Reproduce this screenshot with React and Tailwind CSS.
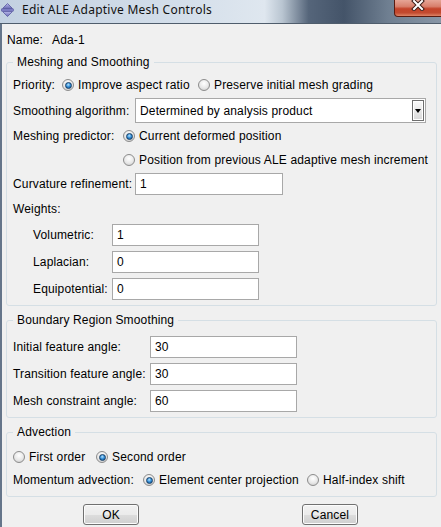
import React from "react";

const F = "font-['Liberation_Sans',Arial,sans-serif]";

function Radio({ checked }) {
  return (
    <span className="w-[12px] h-[12px] rounded-full border border-[#8c8c8c] bg-[radial-gradient(circle_at_50%_35%,#ffffff,#e8e8e8_55%,#c6c6c6)] flex items-center justify-center shrink-0">
      {checked && (
        <span className="w-[7px] h-[7px] rounded-full border border-[#173f66] bg-[radial-gradient(circle_at_45%_35%,#b6e4ff,#2f8ad4_50%,#0c4a84)]" />
      )}
    </span>
  );
}

function RadioItem({ checked, label, className = "" }) {
  return (
    <span className={"flex items-center gap-[4px] shrink-0 " + className}>
      <Radio checked={checked} />
      <span className="whitespace-nowrap">{label}</span>
    </span>
  );
}

function Field({ value, className = "" }) {
  return (
    <div className={"h-[22px] border border-[#a8a8a8] bg-white flex items-center pl-[4px] shrink-0 " + className}>
      {value}
    </div>
  );
}

function Group({ title, className = "", children }) {
  return (
    <div className={"flex flex-col border border-[#d5dfe5] rounded-[3px] " + className}>
      <span className="self-start -mt-[8px] ml-[6px] px-[4px] h-[14px] leading-[14px] bg-[#f0f0f0] whitespace-nowrap">
        {title}
      </span>
      {children}
    </div>
  );
}

function TitleIcon() {
  return (
    <svg width="13" height="14" viewBox="0 0 13 14" className="ml-[1px] mt-[3px] shrink-0">
      <defs>
        <linearGradient id="ig" x1="0" y1="0" x2="0" y2="1">
          <stop offset="0" stopColor="#b9b9ea" />
          <stop offset="1" stopColor="#6a6ab4" />
        </linearGradient>
      </defs>
      <polygon points="6.5,0.5 11.5,5.5 1.5,5.5" fill="url(#ig)" stroke="#5858a0" strokeWidth="0.8" />
      <rect x="0.5" y="6" width="12" height="2" fill="#8c8cd0" stroke="#5858a0" strokeWidth="0.6" />
      <polygon points="1.5,8.5 11.5,8.5 6.5,13.5" fill="url(#ig)" stroke="#5858a0" strokeWidth="0.8" />
    </svg>
  );
}

function TitleBar() {
  return (
    <div className="h-[24px] shrink-0 border-b border-[#4f5d6c] flex items-start bg-[linear-gradient(to_right,#c3d1e1_0%,#d3deea_40%,#dfe7ef_60%,#b9c5d1_64%,#55657a_70%,#445469_78%,#6f7f91_88%,#8896a6_100%)]">
      <TitleIcon />
      <span className="ml-[8px] mt-[3px] h-[14px] leading-[14px] text-[12px] tracking-[0.25px] text-[#111] font-['Noto_Sans',sans-serif] whitespace-nowrap">
        Edit ALE Adaptive Mesh Controls
      </span>
      <div className="ml-auto -mr-[3px] w-[50px] h-[17px] rounded-b-[4px] border border-t-0 border-[#5a1b10] bg-[linear-gradient(to_bottom,#e6a596_0%,#d8806c_40%,#c4442a_55%,#c24a30_80%,#de8466_100%)] flex justify-center">
        <svg width="14" height="11" viewBox="0 0 14 11" className="-ml-[2px]">
          <path d="M3 1 L11 9 M11 1 L3 9" stroke="#3c1d17" strokeWidth="4" strokeLinecap="square" />
          <path d="M3 1 L11 9 M11 1 L3 9" stroke="#ffffff" strokeWidth="2" strokeLinecap="square" />
        </svg>
      </div>
    </div>
  );
}

function Button({ label }) {
  return (
    <div className="w-[56px] h-[21px] rounded-[3px] border border-[#707070] bg-[linear-gradient(to_bottom,#f2f2f2_0%,#ebebeb_50%,#dddddd_51%,#cfcfcf_100%)] shadow-[inset_0_0_0_1px_#fcfcfc] flex items-center justify-center shrink-0">
      {label}
    </div>
  );
}

export default function App() {
  return (
    <div className={`w-[441px] h-[527px] overflow-hidden flex flex-col bg-[#f0f0f0] text-[12px] leading-[14px] tracking-[0.15px] text-black ${F}`}>
      <TitleBar />
      <div className="flex-1 flex flex-col border-l-2 border-[#65758a] pl-[4px] pr-[4px]">
        <div className="mt-[6px] h-[19px] flex items-center pl-[1px]">
          <span className="w-[45px]">Name:</span>
          <span>Ada-1</span>
        </div>

        <Group title="Meshing and Smoothing" className="mt-[13px] pb-[3px]">
          <div className="mt-[4px] h-[24px] flex items-center pl-[6px]">
            <span className="w-[49px] shrink-0">Priority:</span>
            <RadioItem checked label="Improve aspect ratio" className="w-[136px]" />
            <RadioItem label="Preserve initial mesh grading" />
          </div>
          <div className="h-[27px] flex items-center pl-[6px]">
            <span className="w-[122px] shrink-0 whitespace-nowrap">Smoothing algorithm:</span>
            <div className="w-[291px] h-[25px] border border-[#a8a8a8] bg-white flex items-center pl-[4px]">
              <span className="flex-1 whitespace-nowrap">Determined by analysis product</span>
              <div className="w-[12px] h-[21px] mr-[1px] border border-[#6e6e6e] bg-[linear-gradient(to_bottom,#fafafa,#d8d8d8)] shadow-[inset_0_0_0_1px_#ffffff] flex items-center justify-center">
                <span className="w-0 h-0 border-l-[3.5px] border-r-[3.5px] border-t-[4px] border-l-transparent border-r-transparent border-t-black" />
              </div>
            </div>
          </div>
          <div className="h-[24px] flex items-center pl-[6px]">
            <span className="w-[110px] shrink-0 whitespace-nowrap">Meshing predictor:</span>
            <RadioItem checked label="Current deformed position" />
          </div>
          <div className="h-[23px] flex items-center pl-[116px]">
            <RadioItem label="Position from previous ALE adaptive mesh increment" />
          </div>
          <div className="h-[26px] flex items-center pl-[6px]">
            <span className="w-[122px] shrink-0 whitespace-nowrap">Curvature refinement:</span>
            <Field value="1" className="w-[148px]" />
          </div>
          <div className="h-[24px] flex items-center pl-[6px]">Weights:</div>
          <div className="h-[27px] flex items-center pl-[26px]">
            <span className="w-[79px] shrink-0">Volumetric:</span>
            <Field value="1" className="w-[147px]" />
          </div>
          <div className="h-[27px] flex items-center pl-[26px]">
            <span className="w-[79px] shrink-0">Laplacian:</span>
            <Field value="0" className="w-[147px]" />
          </div>
          <div className="h-[27px] flex items-center pl-[26px]">
            <span className="w-[79px] shrink-0">Equipotential:</span>
            <Field value="0" className="w-[147px]" />
          </div>
        </Group>

        <Group title="Boundary Region Smoothing" className="mt-[14px] pb-[3px]">
          <div className="mt-[6px] h-[27px] flex items-center pl-[6px]">
            <span className="w-[137px] shrink-0 whitespace-nowrap">Initial feature angle:</span>
            <Field value="30" className="w-[147px]" />
          </div>
          <div className="h-[27px] flex items-center pl-[6px]">
            <span className="w-[137px] shrink-0 whitespace-nowrap">Transition feature angle:</span>
            <Field value="30" className="w-[147px]" />
          </div>
          <div className="h-[27px] flex items-center pl-[6px]">
            <span className="w-[137px] shrink-0 whitespace-nowrap">Mesh constraint angle:</span>
            <Field value="60" className="w-[147px]" />
          </div>
        </Group>

        <Group title="Advection" className="mt-[14px] pb-[5px]">
          <div className="mt-[6px] h-[24px] flex items-center pl-[6px]">
            <RadioItem label="First order" className="w-[83px]" />
            <RadioItem checked label="Second order" />
          </div>
          <div className="h-[22px] flex items-center pl-[6px]">
            <span className="w-[130px] shrink-0 whitespace-nowrap">Momentum advection:</span>
            <RadioItem checked label="Element center projection" className="w-[164px]" />
            <RadioItem label="Half-index shift" />
          </div>
        </Group>

        <div className="mt-[7px] flex pl-[77px] gap-[163px]">
          <Button label="OK" />
          <Button label="Cancel" />
        </div>
      </div>
    </div>
  );
}
